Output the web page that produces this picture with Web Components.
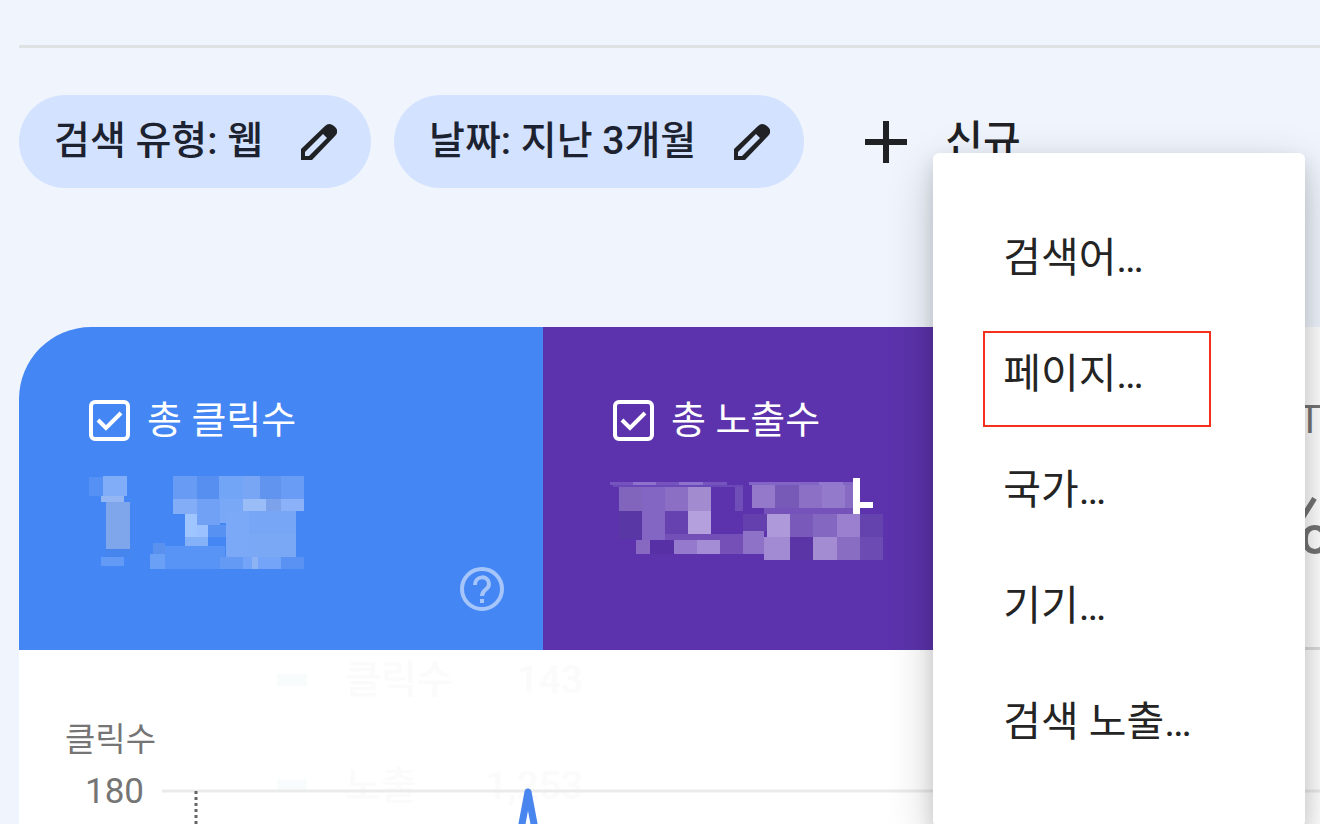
<!DOCTYPE html>
<html lang="ko">
<head>
<meta charset="utf-8">
<title>실적</title>
<style>
  body {
    margin: 0;
    overflow: hidden;
    background: #f0f5fd;
    color: #202124;
    font-family: Roboto, "Noto Sans CJK KR", sans-serif;
  }
</style>
</head>
<body>
<search-report></search-report>

<script>
function attach(el, html) {
  el.attachShadow({ mode: 'open' }).innerHTML = html;
}

// each block is [x, y, width, height, fill]
function mosaic(blocks) {
  return blocks.map(b =>
    `<rect x="${b[0]}" y="${b[1]}" width="${b[2]}" height="${b[3]}" fill="${b[4]}"/>`
  ).join('');
}

const CLICK_BLOCKS = [
  [58, 290, 42, 58, '#5591f4'], [100, 288, 70, 60, '#80acf8'], [92, 348, 70, 18, '#94b6f2'],
  [109, 366, 70, 140, '#7fa5eb'], [109, 506, 70, 24, '#4785ee'], [92, 532, 70, 26, '#639af5'],
  [310, 288, 70, 70, '#689bf4'], [380, 288, 68, 70, '#568ff0'], [448, 288, 70, 70, '#73a5f6'],
  [518, 288, 52, 70, '#78a6f5'], [570, 288, 64, 70, '#6094ee'], [634, 288, 68, 70, '#689cf5'],
  [310, 358, 70, 43, '#83adf7'], [380, 358, 70, 76, '#71a1f5'], [450, 358, 70, 70, '#79a8f6'],
  [518, 358, 70, 34, '#9abcf7'], [588, 358, 46, 34, '#7ba2eb'], [634, 358, 68, 34, '#8bb2f8'],
  [345, 401, 35, 70, '#9ec5ff'], [380, 434, 34, 37, '#9bc1ff'], [345, 471, 69, 26, '#85b1f8'],
  [414, 434, 53, 37, '#5791f2'], [467, 392, 70, 138, '#7ba9f7'], [537, 392, 140, 70, '#76a6f5'],
  [537, 462, 140, 70, '#7ba8f4'], [250, 490, 35, 32, '#5a91ef'], [240, 522, 70, 44, '#6ba0f7'],
  [285, 498, 180, 68, '#5894f5'], [450, 530, 70, 36, '#649af3'], [520, 530, 112, 36, '#73a4f7'],
  [546, 532, 18, 34, '#8db3f5'], [632, 530, 70, 36, '#5a92f3']
];

const VIEW_BLOCKS = [
  [60, 305, 350, 10, '#7654bd'], [128, 305, 70, 10, '#8e73cc'], [268, 305, 70, 10, '#8e73cc'],
  [68, 315, 390, 7, '#6b48b7'], [478, 305, 310, 9, '#8265c4'], [688, 305, 70, 9, '#9278ce'],
  [86, 322, 70, 70, '#8165bd'], [156, 322, 70, 157, '#8366c3'], [226, 322, 68, 70, '#8a6fc4'],
  [294, 322, 70, 70, '#a28bcf'], [434, 322, 26, 70, '#6f4eb8'], [86, 392, 70, 86, '#5937a5'],
  [226, 392, 68, 70, '#6642b0'], [294, 392, 70, 70, '#b4a0dc'], [226, 462, 234, 17, '#7350b8'],
  [486, 314, 70, 70, '#9478ca'], [556, 314, 70, 70, '#775ab7'], [626, 314, 70, 70, '#8c70c5'],
  [696, 314, 70, 70, '#947acb'], [766, 314, 22, 70, '#876bc3'], [522, 384, 266, 17, '#7652bb'],
  [460, 402, 70, 50, '#6440ae'], [530, 401, 70, 70, '#ae9adb'], [600, 401, 70, 70, '#7959b9'],
  [670, 401, 70, 70, '#8467c1'], [740, 401, 69, 70, '#9a80cf'], [809, 401, 70, 70, '#6543ae'],
  [137, 479, 44, 43, '#8769c2'], [181, 479, 70, 43, '#5830a5'], [251, 479, 70, 43, '#9479cd'],
  [321, 479, 69, 43, '#a58dd6'], [390, 471, 70, 51, '#7450b7'], [460, 453, 62, 69, '#8e72c8'],
  [522, 471, 78, 69, '#a28bd2'], [600, 471, 70, 69, '#5b35a5'], [670, 471, 70, 69, '#a48cd3'],
  [740, 471, 69, 69, '#886dc2'], [809, 471, 70, 69, '#6c4bb2'],
  [789, 293, 21, 109, '#fff'], [810, 366, 39, 19, '#fff']
];

class FilterChip extends HTMLElement {
  constructor() {
    super();
    attach(this, `
      <style>
        :host { display: block; flex: none; }
        button {
          display: flex;
          align-items: center;
          gap: 38px;
          height: 93px;
          padding: 0 34px 0 35px;
          border: 0;
          border-radius: 47px;
          background: #d3e2ff;
          color: #1c2230;
          font: 500 39px/56px Roboto, "Noto Sans CJK KR", sans-serif;
          white-space: nowrap;
        }
        span { padding-bottom: 2px; }
        svg { width: 36px; height: 36px; flex: none; }
      </style>
      <button type="button">
        <span><slot></slot></span>
        <svg viewBox="0 0 36 36" aria-hidden="true">
          <path fill="#1f2124" fill-rule="evenodd" d="M0 36V25L24 2Q28-2 33 2L35 4Q38 8 34 12L11 36ZM4 32H8L26 14L22 10L4 28Z"/>
        </svg>
      </button>`);
  }
}
customElements.define('filter-chip', FilterChip);

class MenuItem extends HTMLElement {
  constructor() {
    super();
    attach(this, `
      <style>
        :host { display: block; position: relative; }
        button {
          display: block;
          width: 100%;
          height: 116px;
          padding: 0 0 0 70px;
          border: 0;
          background: none;
          color: #242424;
          font: 400 41px/56px Roboto, "Noto Sans CJK KR", sans-serif;
          text-align: left;
          white-space: nowrap;
        }
        .mark { display: none; }
        :host([marked]) .mark {
          display: block;
          position: absolute;
          top: 15px;
          left: 50px;
          right: 94px;
          height: 92px;
          border: 2px solid #f5311b;
          pointer-events: none;
        }
      </style>
      <button type="button" role="menuitem"><slot></slot></button>
      <div class="mark"></div>`);
  }
}
customElements.define('menu-item', MenuItem);

class NewFilter extends HTMLElement {
  constructor() {
    super();
    attach(this, `
      <style>
        :host { display: block; position: relative; flex: none; }
        .add {
          display: flex;
          align-items: center;
          gap: 38px;
          height: 93px;
          padding: 0;
          border: 0;
          background: none;
          color: #202124;
          font: 500 41px/56px Roboto, "Noto Sans CJK KR", sans-serif;
        }
        .add span { padding-bottom: 2px; }
        .add svg { width: 42px; height: 42px; }
        .menu {
          position: absolute;
          z-index: 2;
          top: 58px;
          left: 68px;
          width: 372px;
          box-sizing: border-box;
          padding: 47px 0;
          border-radius: 6px;
          background: #fff;
          box-shadow: 0 16px 48px rgba(0, 0, 0, .2), 0 8px 18px rgba(0, 0, 0, .12);
        }
      </style>
      <button class="add" type="button" aria-haspopup="menu" aria-expanded="true">
        <svg viewBox="0 0 42 42" aria-hidden="true"><path d="M21 0V42M0 21H42" stroke="#202124" stroke-width="6"/></svg>
        <span>신규</span>
      </button>
      <div class="menu" role="menu"><slot></slot></div>`);
  }
}
customElements.define('new-filter', NewFilter);

class MetricTile extends HTMLElement {
  constructor() {
    super();
    attach(this, `
      <style>
        :host {
          display: flex;
          flex-direction: column;
          flex: 0 0 524px;
          box-sizing: border-box;
          height: 323px;
          padding: 69px 39px 39px 70px;
          color: #fff;
        }
        :host([tone="blue"]) { background: #4486f3; }
        :host([tone="purple"]) { background: #5c33ac; }
        :host([tone="plain"]) {
          background: #fff;
          color: #757575;
          border-bottom: 3px solid #dcdcdc;
        }
        label {
          display: flex;
          align-items: center;
          gap: 17px;
          height: 48px;
          font-size: 38px;
          line-height: 48px;
          white-space: nowrap;
        }
        .box { display: grid; flex: none; }
        .box > * { grid-area: 1 / 1; }
        input {
          appearance: none;
          width: 41px;
          height: 41px;
          margin: 0;
          border: 4px solid #fff;
          border-radius: 6px;
        }
        :host([tone="plain"]) input { border-color: #757575; }
        .box svg { width: 41px; height: 41px; pointer-events: none; display: none; }
        input:checked + svg { display: block; }
        .body { display: flex; justify-content: space-between; flex: 1; padding-top: 30px; }
        .help { align-self: flex-end; width: 44px; height: 44px; padding: 0; border: 0; background: none; }
        .help svg { display: block; }
        :host(:not([help])) .help { display: none; }
      </style>
      <label>
        <span class="box">
          <input type="checkbox">
          <svg viewBox="0 0 41 41" aria-hidden="true"><path d="M9 20L17 28L32 13" fill="none" stroke="#fff" stroke-width="4"/></svg>
        </span>
        <span><slot name="label"></slot></span>
      </label>
      <div class="body">
        <slot></slot>
        <button class="help" type="button" aria-label="도움말">
          <svg width="44" height="44" viewBox="0 0 44 44" fill="none" stroke="#a6c6fb" stroke-width="4">
            <circle cx="22" cy="22" r="20"/>
            <path d="M15 18C15 8 29 8 29 17C29 23 22 22 22 29"/>
            <path d="M22 32V36"/>
          </svg>
        </button>
      </div>`);
  }

  connectedCallback() {
    this.shadowRoot.querySelector('input').checked = this.hasAttribute('checked');
  }
}
customElements.define('metric-tile', MetricTile);

class BlurredValue extends HTMLElement {
  connectedCallback() {
    if (this.shadowRoot) return;
    const clicks = this.getAttribute('kind') === 'clicks';
    attach(this, `
      <style>
        :host { display: block; }
        svg { display: block; overflow: visible; }
      </style>
      <svg width="219" height="96" viewBox="${clicks ? 57 : 69} 282 657 288" shape-rendering="crispEdges" aria-hidden="true">
        ${mosaic(clicks ? CLICK_BLOCKS : VIEW_BLOCKS)}
      </svg>`);
  }
}
customElements.define('blurred-value', BlurredValue);

class ClicksChart extends HTMLElement {
  constructor() {
    super();
    attach(this, `
      <style>
        :host { display: block; position: relative; padding: 67px 0 0 46px; color: #757575; }
        .title { font-size: 33px; line-height: 46px; }
        .row {
          display: flex;
          align-items: flex-start;
          gap: 18px;
          padding-left: 20px;
          margin-top: 8px;
          position: relative;
          z-index: 1;
        }
        .tick { font-size: 35px; line-height: 42px; }
        .plot { flex: 1; height: 160px; margin-top: 16px; }
        svg { display: block; overflow: visible; }
        /* tooltip at the very end of its fade-out */
        .tip {
          position: absolute;
          top: 2px;
          left: 258px;
          display: grid;
          grid-template-columns: 30px 110px 90px;
          column-gap: 38px;
          row-gap: 50px;
          align-items: center;
          color: #fbfbfb;
          font-size: 39px;
          font-weight: 500;
          line-height: 56px;
        }
        .tip i { height: 12px; background: #f9fcfd; }
        .tip b { justify-self: end; font-weight: 500; }
      </style>
      <div class="title">클릭수</div>
      <div class="row">
        <div class="tick">180</div>
        <svg class="plot">
          <path d="M0 4H2000" stroke="#ebebeb" stroke-width="3"/>
          <path d="M34 4V160" stroke="#666" stroke-width="3" stroke-dasharray="3 3"/>
          <path d="M348 100L366 5L384 100" fill="none" stroke="#4885ee" stroke-width="7" stroke-linejoin="round"/>
        </svg>
      </div>
      <div class="tip">
        <i></i><span>클릭수</span><b>143</b>
        <i></i><span>노출</span><b>1,253</b>
      </div>`);
  }
}
customElements.define('clicks-chart', ClicksChart);

class SearchReport extends HTMLElement {
  constructor() {
    super();
    attach(this, `
      <style>
        :host {
          display: flex;
          flex-direction: column;
          box-sizing: border-box;
          height: 100vh;
          padding: 45px 0 0 19px;
          overflow: hidden;
        }
        hr { width: 100%; height: 3px; margin: 0; border: 0; background: #dfe2e3; flex: none; }
        .filters { display: flex; gap: 23px; margin-top: 47px; position: relative; z-index: 2; }
        new-filter { margin-left: 38px; }
        .card {
          flex: 1;
          margin-top: 139px;
          overflow: hidden;
          border-top-left-radius: 72px;
          background: #fff;
        }
        .tiles { display: flex; }
        .ctr { padding: 3px 0 0 130px; font-size: 88px; line-height: 92px; font-weight: 400; }
      </style>
      <hr>
      <div class="filters">
        <filter-chip>검색 유형: 웹</filter-chip>
        <filter-chip>날짜: 지난 3개월</filter-chip>
        <new-filter>
          <menu-item>검색어…</menu-item>
          <menu-item marked>페이지…</menu-item>
          <menu-item>국가…</menu-item>
          <menu-item>기기…</menu-item>
          <menu-item>검색 노출…</menu-item>
        </new-filter>
      </div>
      <div class="card">
        <div class="tiles">
          <metric-tile tone="blue" checked help>
            <span slot="label">총 클릭수</span>
            <blurred-value kind="clicks"></blurred-value>
          </metric-tile>
          <metric-tile tone="purple" checked>
            <span slot="label">총 노출수</span>
            <blurred-value kind="views"></blurred-value>
          </metric-tile>
          <metric-tile tone="plain">
            <span slot="label">평균 CTR</span>
            <span class="ctr">%</span>
          </metric-tile>
        </div>
        <clicks-chart></clicks-chart>
      </div>`);
  }
}
customElements.define('search-report', SearchReport);
</script>
</body>
</html>
